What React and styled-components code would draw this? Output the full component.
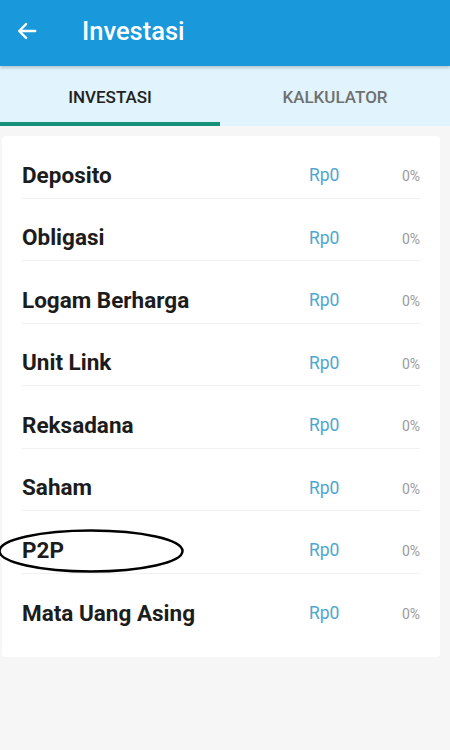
import React from 'react';
import styled, { createGlobalStyle } from 'styled-components';

const GlobalStyle = createGlobalStyle`
  body {
    margin: 0;
    background-color: #f6f6f6;
    font-family: Roboto, "Liberation Sans", Arial, sans-serif;
  }
`;

const Screen = styled.div`
  width: 450px;
  min-height: 750px;
  background-color: #f6f6f6;
`;

const AppBar = styled.header`
  display: flex;
  align-items: center;
  height: 66px;
  padding: 0 15px;
  box-sizing: border-box;
  background-color: #1a98dc;
  box-shadow: 0 2px 3px rgba(0, 0, 0, 0.18);
  position: relative;
  z-index: 1;
`;

const BackButton = styled.button`
  display: flex;
  align-items: center;
  justify-content: center;
  width: 24px;
  height: 24px;
  padding: 0;
  border: none;
  background: none;
  margin-top: -4px;
`;

const Title = styled.h1`
  margin: -4px 0 0 43px;
  font-size: 25.5px;
  font-weight: 500;
  color: #ffffff;
`;

const TabBar = styled.nav`
  display: flex;
  height: 60px;
  background-color: #e1f3fc;
`;

const Tab = styled.div`
  display: flex;
  align-items: center;
  justify-content: center;
  width: ${(p) => p.$width}px;
  box-sizing: border-box;
  padding-top: 5px;
  font-size: 17px;
  font-weight: 500;
  color: ${(p) => (p.$active ? '#222222' : '#707070')};
  border-bottom: 4px solid ${(p) => (p.$active ? '#15917a' : 'transparent')};
`;

const Card = styled.section`
  margin: 10px 10px 0 2px;
  padding: 0 20px 21px 20px;
  background-color: #ffffff;
  border-radius: 4px;
`;

const Row = styled.div`
  display: flex;
  align-items: center;
  height: 62.5px;
  padding-top: 18px;
  box-sizing: border-box;
  border-bottom: ${(p) => (p.$last ? 'none' : '1px solid #f1f1f1')};
  position: relative;
`;

const Name = styled.span`
  flex: 1;
  font-size: 22.5px;
  font-weight: 700;
  color: #1c1c1c;
  margin-top: -2px;
`;

const Amount = styled.span`
  width: 91px;
  font-size: 17.5px;
  color: #4ea6d0;
  margin-top: -1px;
`;

const Percent = styled.span`
  width: 20px;
  font-size: 14px;
  color: #9a9a9a;
  text-align: right;
  margin-top: 1px;
`;

const Circle = styled.svg`
  position: absolute;
  left: -24px;
  top: 17.5px;
  overflow: visible;
  pointer-events: none;
`;

const items = [
  'Deposito',
  'Obligasi',
  'Logam Berharga',
  'Unit Link',
  'Reksadana',
  'Saham',
  'P2P',
  'Mata Uang Asing',
];

const BackArrow = () => (
  <svg width="22" height="22" viewBox="0 0 24 24" fill="none">
    <path
      d="M21 12H4M11 4.5L3.5 12L11 19.5"
      stroke="#ffffff"
      strokeWidth="2.6"
      strokeLinecap="round"
      strokeLinejoin="round"
    />
  </svg>
);

const App = () => (
  <>
    <GlobalStyle />
    <Screen>
      <AppBar>
        <BackButton>
          <BackArrow />
        </BackButton>
        <Title>Investasi</Title>
      </AppBar>
      <TabBar>
        <Tab $active $width={220}>INVESTASI</Tab>
        <Tab $width={230}>KALKULATOR</Tab>
      </TabBar>
      <Card>
        {items.map((name, i) => (
          <Row key={name} $last={i === items.length - 1}>
            <Name>{name}</Name>
            <Amount>Rp0</Amount>
            <Percent>0%</Percent>
            {name === 'P2P' && (
              <Circle width="186" height="44" viewBox="0 0 186 44">
                <ellipse cx="93" cy="22" rx="91.5" ry="20.5" fill="none" stroke="#000000" strokeWidth="2.5" />
              </Circle>
            )}
          </Row>
        ))}
      </Card>
    </Screen>
  </>
);

export default App;
